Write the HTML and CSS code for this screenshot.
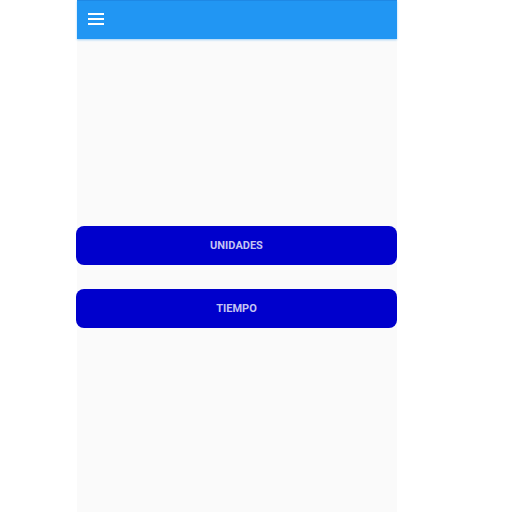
FILE: index.html
```html
<!DOCTYPE html>
<html lang="es">
<head>
    <meta charset="UTF-8">
    <meta name="viewport" content="width=device-width, initial-scale=1.0">
    <title>Menu</title>
    <link rel="stylesheet" href="styles.css">
</head>
<body>
    <div class="phone">
        <header class="toolbar">
            <span class="menu-icon">
                <svg width="16" height="12" viewBox="0 0 16 12">
                    <rect x="0" y="0" width="16" height="2" fill="#fff"/>
                    <rect x="0" y="5" width="16" height="2" fill="#fff"/>
                    <rect x="0" y="10" width="16" height="2" fill="#fff"/>
                </svg>
            </span>
        </header>
        <main class="content">
            <button class="main-btn">UNIDADES</button>
            <button class="main-btn">TIEMPO</button>
        </main>
    </div>
</body>
</html>
```

FILE: styles.css
```css
body {
    margin: 0;
    background-color: #fff;
    font-family: Roboto, "Liberation Sans", Arial, sans-serif;
}

.phone {
    width: 320px;
    height: 512px;
    margin-left: 77px;
    background-color: #fafafa;
    display: flex;
    flex-direction: column;
}

.toolbar {
    height: 39px;
    background-color: #2196f3;
    border-top: 1px solid #1e88e5;
    box-sizing: border-box;
    display: flex;
    align-items: center;
    padding-left: 11px;
    box-shadow: 0 1px 2px rgba(33, 150, 243, 0.4);
}

.menu-icon {
    display: flex;
    margin-top: -2px;
}

.content {
    display: flex;
    flex-direction: column;
    gap: 24px;
    padding-top: 187px;
}

.main-btn {
    height: 39px;
    margin-left: -1px;
    border: none;
    border-radius: 8px;
    background-color: #0000cc;
    color: #c4c4f2;
    font-family: Roboto, "Liberation Sans", Arial, sans-serif;
    font-size: 11px;
    font-weight: bold;
    letter-spacing: 0;
}
```
